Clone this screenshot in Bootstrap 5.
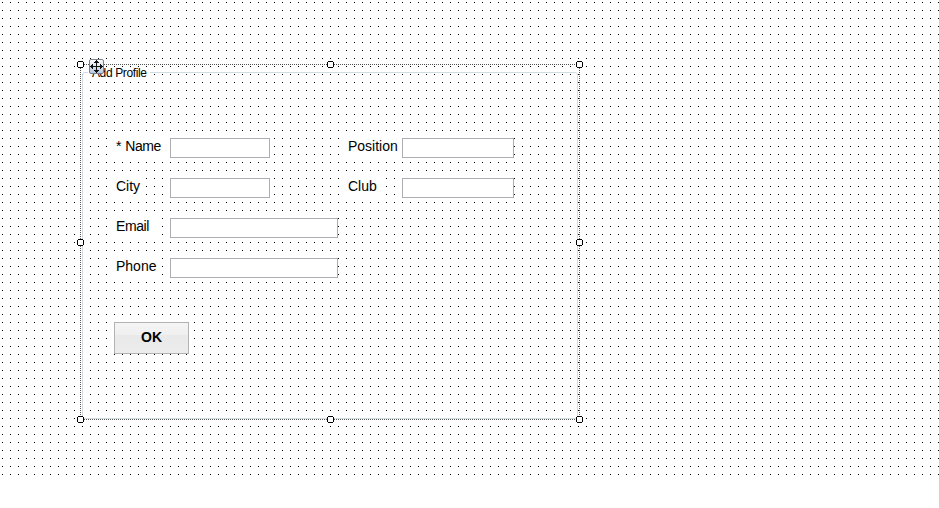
<!DOCTYPE html>
<html lang="en">
<head>
<meta charset="utf-8">
<title>Add Profile</title>
<link href="https://cdn.jsdelivr.net/npm/bootstrap@5.3.0/dist/css/bootstrap.min.css" rel="stylesheet">
<style>
body{margin:0;background:#fff;color:#000;font:14px/16px "Liberation Sans",Arial,sans-serif}
.surface{height:478px;padding:64px 0 0 80px;background:conic-gradient(from 90deg at 7px 7px,#000 25%,transparent 0) -5px -5px/8px 8px}
.selection{width:500px;height:356px;padding:2px}
.marquee{left:0;top:0;pointer-events:none}
.group{height:347px;margin-top:6px;border:1px solid #d0dbe2;border-radius:3px;padding:65px 0 0 31px}
.group-title{left:88px;top:67px;height:13px;padding:0 3px 0 4px;font-size:12px;letter-spacing:-.38px;line-height:13px;background:#fff;white-space:nowrap}
.form-line{height:20px;margin-bottom:20px}
.tag{height:20px;padding:0 5px 0 2px;line-height:17px;background:#fff;white-space:nowrap}
.tag.tight{padding-right:7px;letter-spacing:-.4px;word-spacing:.7px}
.label-cell{width:56px}
.form-line .form-control{height:20px;min-height:0;padding:0 4px;border:1px solid #abadb3;border-radius:0;background:#fff;font-size:13px}
.w-short{width:100px}.w-mid{width:112px}.w-long{width:168px}
.gap-col{width:76px}
.ok-btn{width:75px;height:32px;margin-top:44px;padding:0 0 2px;border:1px solid #b2b2b2;border-radius:0;background:linear-gradient(#f5f5f5 0,#efefef 40%,#e9e9e9 41%,#ececec 100%);color:#000;font-size:14px;font-weight:700;line-height:28px}
.move-icon{left:89px;top:59px}
</style>
<script src="https://cdn.jsdelivr.net/npm/bootstrap@5.3.0/dist/js/bootstrap.bundle.min.js"></script>
</head>
<body>
<main class="surface position-relative">
<section class="selection position-relative">
<form class="group">
<div class="form-line d-flex"><div class="label-cell"><label class="tag tight d-inline-block" for="name">* Name</label></div><input id="name" class="form-control w-short"><div class="gap-col"></div><div class="label-cell"><label class="tag d-inline-block" for="position">Position</label></div><input id="position" class="form-control w-mid"></div>
<div class="form-line d-flex"><div class="label-cell"><label class="tag d-inline-block" for="city">City</label></div><input id="city" class="form-control w-short"><div class="gap-col"></div><div class="label-cell"><label class="tag d-inline-block" for="club">Club</label></div><input id="club" class="form-control w-mid"></div>
<div class="form-line d-flex"><div class="label-cell"><label class="tag tight d-inline-block" for="email">Email</label></div><input id="email" class="form-control w-long"></div>
<div class="form-line d-flex"><div class="label-cell"><label class="tag d-inline-block" for="phone">Phone</label></div><input id="phone" class="form-control w-long"></div>
<button type="button" class="btn ok-btn d-block">OK</button>
</form>
<svg class="marquee position-absolute overflow-visible" width="500" height="356" shape-rendering="crispEdges">
<defs><g id="handle"><path fill="#fff" d="M1 0h5v1h1v5h-1v1h-5v-1h-1v-5h1z"/><path fill="#000" d="M1 0h5v1h-5zM1 6h5v1h-5zM0 1h1v5h-1zM6 1h1v5h-1z"/></g></defs>
<path fill="none" stroke="#fff" d="M0 .5H500M0 355.5H500M.5 0V356M499.5 0V356"/>
<path fill="none" stroke="#555" stroke-dasharray="1 1" d="M0 .5H500M0 355.5H500M.5 0V356M499.5 0V356"/>
<use href="#handle" x="-3" y="-3"/><use href="#handle" x="247" y="-3"/><use href="#handle" x="496" y="-3"/>
<use href="#handle" x="-3" y="175"/><use href="#handle" x="496" y="175"/>
<use href="#handle" x="-3" y="352"/><use href="#handle" x="247" y="352"/><use href="#handle" x="496" y="352"/>
</svg>
</section>
<span class="group-title position-absolute">Add Profile</span>
<svg class="move-icon position-absolute" width="15" height="15">
<defs><linearGradient id="face" x2="0" y2="1"><stop stop-color="#fff"/><stop offset="1" stop-color="#b4c6e0"/></linearGradient></defs>
<rect x=".5" y=".5" width="14" height="14" rx="1.5" fill="url(#face)" stroke="#77808c"/>
<g fill="#111" shape-rendering="crispEdges"><path d="M7 1h1v13h-1zM1 7h13v1h-13z"/><path d="M6 2h3v1h-3zM5 3h5v1h-5zM6 12h3v1h-3zM5 11h5v1h-5zM2 6h1v3h-1zM3 5h1v5h-1zM12 6h1v3h-1zM11 5h1v5h-1z"/></g></svg>
</main>
</body>
</html>
